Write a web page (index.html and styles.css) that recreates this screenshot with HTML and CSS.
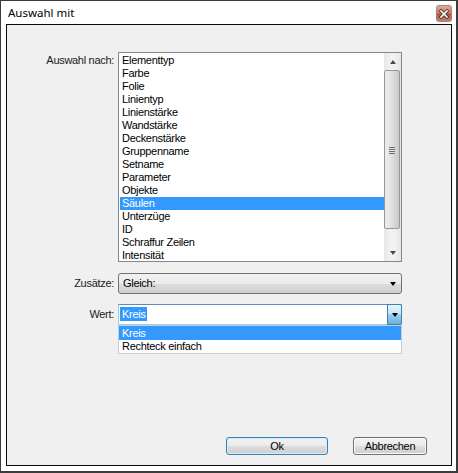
FILE: index.html
```html
<!DOCTYPE html>
<html>
<head>
<meta charset="utf-8">
<link rel="stylesheet" href="styles.css">
</head>
<body>
<div class="window">
  <div class="titlebar">
    <span class="title">Auswahl mit</span>
    <span class="close">
      <svg width="16" height="17" viewBox="0 0 16 17">
        <defs>
          <linearGradient id="cg" x1="0" y1="0" x2="0" y2="1">
            <stop offset="0" stop-color="#e9a999"/>
            <stop offset="0.45" stop-color="#d47a64"/>
            <stop offset="0.55" stop-color="#c24a2e"/>
            <stop offset="1" stop-color="#d0826a"/>
          </linearGradient>
        </defs>
        <rect x="0.5" y="0.5" width="15" height="16" rx="2" fill="url(#cg)" stroke="#8f8f8f"/>
        <path d="M5 6 L11 12 M11 6 L5 12" stroke="#3a3a3a" stroke-width="3.2" stroke-linecap="square"/>
        <path d="M5 6 L11 12 M11 6 L5 12" stroke="#ffffff" stroke-width="1.6" stroke-linecap="square"/>
      </svg>
    </span>
  </div>
  <div class="panel">
    <div class="form">
      <div class="lbl lbl-top">Auswahl nach:</div>
      <div class="listbox">
        <div class="items">
          <div class="item">Elementtyp</div>
          <div class="item">Farbe</div>
          <div class="item">Folie</div>
          <div class="item">Linientyp</div>
          <div class="item">Linienstärke</div>
          <div class="item">Wandstärke</div>
          <div class="item">Deckenstärke</div>
          <div class="item">Gruppenname</div>
          <div class="item">Setname</div>
          <div class="item">Parameter</div>
          <div class="item">Objekte</div>
          <div class="item sel">Säulen</div>
          <div class="item">Unterzüge</div>
          <div class="item">ID</div>
          <div class="item">Schraffur Zeilen</div>
          <div class="item">Intensität</div>
        </div>
        <div class="vscroll">
          <div class="sb-btn"><span class="tri-up"></span></div>
          <div class="sb-track">
            <div class="thumb"><span class="grip"></span></div>
          </div>
          <div class="sb-btn"><span class="tri-down"></span></div>
        </div>
      </div>

      <div class="lbl lbl-combo gap1">Zusätze:</div>
      <div class="combo gap1">
        <span class="combo-text">Gleich:</span>
        <span class="tri-down dark"></span>
      </div>

      <div class="lbl lbl-combo gap2">Wert:</div>
      <div class="edit gap2">
        <span class="edit-text"><span class="hl">Kreis</span></span>
        <span class="drop-btn"><span class="tri-down dark"></span></span>
        <div class="droplist">
          <div class="ditem sel">Kreis</div>
          <div class="ditem">Rechteck einfach</div>
        </div>
      </div>
    </div>
    <div class="buttons">
      <button class="btn btn-ok">Ok</button>
      <button class="btn btn-cancel">Abbrechen</button>
    </div>
  </div>
</div>
</body>
</html>
```
FILE: styles.css
```css
html, body {
  margin: 0;
  padding: 0;
  background: #ffffff;
}
.window {
  width: 458px;
  height: 473px;
  box-sizing: border-box;
  border-style: solid;
  border-color: #3b3b3b;
  border-width: 1px 2px 2px 1px;
  padding: 0 4px 5px 5px;
  background: #ffffff;
  display: flex;
  flex-direction: column;
  font-family: "Liberation Sans", Arial, sans-serif;
  font-size: 11px;
  color: #000;
}
.titlebar {
  height: 23px;
  display: flex;
  justify-content: space-between;
  align-items: flex-start;
  flex: none;
}
.title {
  font-family: "Noto Sans", "Open Sans", sans-serif;
  font-size: 11.5px;
  line-height: 16px;
  padding: 4px 0 0 2px;
  color: #000;
}
.close {
  display: block;
  width: 16px;
  height: 17px;
  margin-top: 4px;
}
.close svg { display: block; }
.panel {
  flex: 1;
  border: 1px solid #0a0a0a;
  background: #f0f0f0;
  display: flex;
  flex-direction: column;
  min-height: 0;
}
.form {
  display: grid;
  grid-template-columns: 111px 284px;
  padding-top: 27px;
  letter-spacing: -0.3px;
}
.lbl {
  text-align: right;
  padding-right: 4px;
  color: #1a1a1a;
  line-height: 13px;
}
.lbl-top { padding-top: 2px; }
.lbl-combo { padding-top: 4px; }
.gap1 { margin-top: 11px; }
.gap2 { margin-top: 10px; }

.listbox {
  height: 210px;
  box-sizing: border-box;
  border: 1px solid #828790;
  background: #fff;
  display: flex;
  overflow: hidden;
}
.items {
  flex: 1;
  padding: 1px 0 0 1px;
}
.item {
  height: 13px;
  line-height: 13px;
  padding-left: 2px;
  white-space: nowrap;
}
.item.sel, .ditem.sel {
  background: #3399ff;
  color: #fff;
}
.vscroll {
  width: 17px;
  display: flex;
  flex-direction: column;
  background: linear-gradient(to right, #e6e6e6, #f2f2f2 40%, #f2f2f2 60%, #e6e6e6);
}
.sb-btn {
  height: 17px;
  display: flex;
  align-items: center;
  justify-content: center;
  flex: none;
}
.sb-track {
  flex: 1;
  padding: 0 1px 0 0;
}
.thumb {
  height: 159px;
  box-sizing: border-box;
  border: 1px solid #979797;
  border-radius: 2px;
  background: linear-gradient(to right, #ececec, #e6e6e6 30%, #d6d6d6 70%, #c8c8c8);
  display: flex;
  align-items: center;
  justify-content: center;
}
.grip {
  width: 6px;
  height: 7px;
  background: repeating-linear-gradient(to bottom, #6a6a6a 0, #6a6a6a 1px, #e8e8e8 1px, #e8e8e8 2px);
  margin-top: 2px;
}
.tri-up, .tri-down {
  width: 0;
  height: 0;
  border-left: 3.5px solid transparent;
  border-right: 3.5px solid transparent;
}
.tri-up { border-bottom: 4px solid #4a4a4a; }
.tri-down { border-top: 4px solid #4a4a4a; }
.tri-down.dark { border-top-color: #000; }

.combo {
  height: 21px;
  box-sizing: border-box;
  border: 1px solid #707070;
  border-radius: 3px;
  background: linear-gradient(to bottom, #f2f2f2 0, #ebebeb 50%, #dddddd 50%, #cfcfcf 100%);
  display: flex;
  align-items: center;
  justify-content: space-between;
  padding: 0 5px 0 4px;
}
.combo-text { line-height: 13px; }

.edit {
  position: relative;
  height: 21px;
  box-sizing: border-box;
  border: 1px solid #a4c9e3;
  border-top-color: #5b8cbf;
  background: #fff;
  display: flex;
  align-items: center;
  justify-content: space-between;
  padding-left: 1px;
}
.edit-text { line-height: 13px; }
.hl {
  background: #3399ff;
  color: #fff;
  padding: 1px 1px 1px 2px;
}
.drop-btn {
  width: 15px;
  height: 21px;
  box-sizing: border-box;
  margin: -1px -1px -1px 0;
  border: 1px solid #3c7fb1;
  border-radius: 0 2px 2px 0;
  background: linear-gradient(to bottom, #e5f4fc 0, #c4e5f6 50%, #98d1ef 50%, #68b3db 100%);
  display: flex;
  align-items: center;
  justify-content: center;
}
.droplist {
  position: absolute;
  left: -1px;
  right: -1px;
  top: 20px;
  box-sizing: border-box;
  border: 1px solid #c0cfdd;
  background: #fff;
}
.ditem {
  height: 14px;
  line-height: 14px;
  padding-left: 3px;
  white-space: nowrap;
}
.ditem + .ditem { height: 13px; line-height: 13px; }

.buttons {
  margin-top: auto;
  display: flex;
  justify-content: flex-end;
  gap: 25px;
  padding: 0 24px 10px 0;
}
.btn {
  height: 18px;
  box-sizing: border-box;
  font-family: "Liberation Sans", Arial, sans-serif;
  font-size: 11px;
  letter-spacing: -0.3px;
  color: #000;
  border-radius: 3px;
  padding: 0;
  margin: 0;
  line-height: 14px;
  background: linear-gradient(to bottom, #f2f2f2 0, #ebebeb 50%, #dddddd 50%, #cfcfcf 100%);
}
.btn-ok {
  width: 102px;
  border: 1px solid #3c7fb1;
  box-shadow: inset 0 0 0 1px #cfeefc;
}
.btn-cancel {
  width: 74px;
  border: 1px solid #707070;
  box-shadow: inset 0 0 0 1px #fcfcfc;
}
```
